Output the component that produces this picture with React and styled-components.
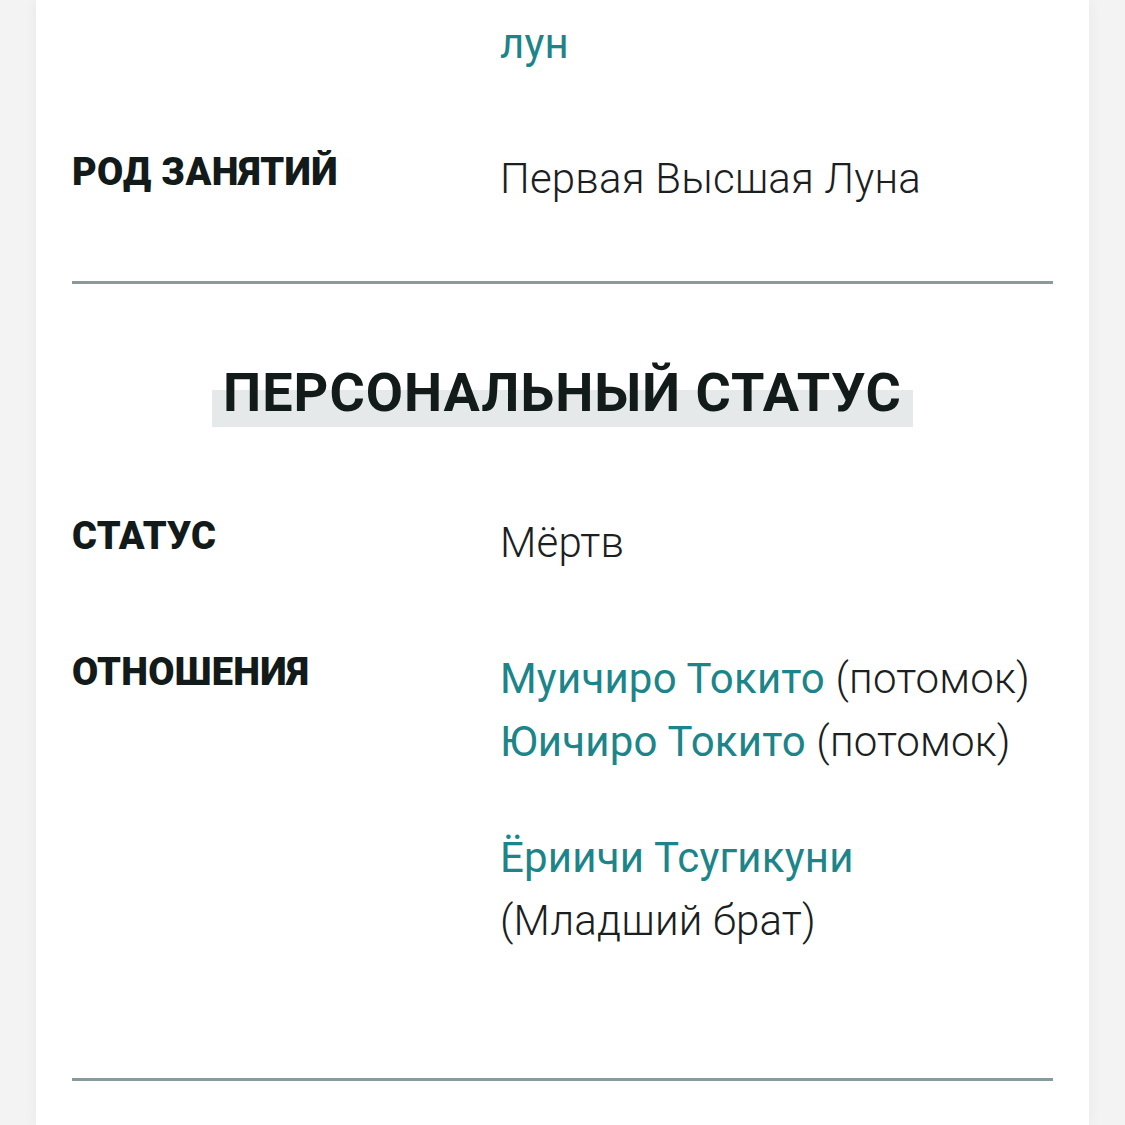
import React from "react";
import styled, { createGlobalStyle } from "styled-components";

const GlobalStyle = createGlobalStyle`
	html, body {
		margin: 0;
		padding: 0;
		background: #f3f3f3;
	}
	body {
		font-family: "Roboto", "Liberation Sans", sans-serif;
	}
`;

const Page = styled.div`
	min-height: 1125px;
	padding: 0 36px;
	overflow: hidden;
`;

const Card = styled.div`
	background: #ffffff;
	min-height: 1125px;
	padding: 12px 36px 0;
	box-sizing: border-box;
	box-shadow: 0 0 14px rgba(0, 0, 0, 0.05);
`;

const InfoRow = styled.div`
	display: grid;
	grid-template-columns: 428px 1fr;
	margin-top: ${(props) => props.$gap || 0}px;
`;

const Label = styled.div`
	font-family: "Roboto", sans-serif;
	font-weight: 900;
	font-size: 38px;
	line-height: 50px;
	letter-spacing: 0.3px;
	text-transform: uppercase;
	color: #121a1a;
`;

const Value = styled.div`
	font-family: "Roboto", sans-serif;
	font-weight: 300;
	font-size: 42px;
	line-height: 63px;
	letter-spacing: 0.2px;
	color: #1c1f1f;
`;

const Para = styled.p`
	margin: ${(props) => props.$top || 0}px 0 0;
`;

const CharLink = styled.a`
	color: #1b8589;
	font-weight: 400;
	text-decoration: none;
`;

const Divider = styled.hr`
	border: none;
	height: 3px;
	background: #8a9a9b;
	margin: ${(props) => props.$top}px 0 0;
`;

const SectionTitle = styled.h2`
	margin: 82px 0 0;
	text-align: center;
	font-family: "Roboto", sans-serif;
	font-weight: 700;
	font-size: 54px;
	line-height: 54px;
	letter-spacing: 1px;
	color: #121a1a;
	text-transform: uppercase;
`;

const Highlight = styled.span`
	display: inline-block;
	padding: 0 11px 7px;
	background: linear-gradient(to bottom, transparent 24px, #e6e9e9 24px);
`;

const App = () => {
	return (
		<>
			<GlobalStyle />
			<Page>
				<Card>
					<InfoRow>
						<div />
						<Value>
							<CharLink href="#">лун</CharLink>
						</Value>
					</InfoRow>

					<InfoRow $gap={72}>
						<Label>Род занятий</Label>
						<Value>Первая Высшая Луна</Value>
					</InfoRow>

					<Divider $top={71} />

					<SectionTitle>
						<Highlight>Персональный статус</Highlight>
					</SectionTitle>

					<InfoRow $gap={84}>
						<Label>Статус</Label>
						<Value>Мёртв</Value>
					</InfoRow>

					<InfoRow $gap={73}>
						<Label>Отношения</Label>
						<Value>
							<Para>
								<CharLink href="#">Муичиро Токито</CharLink> (потомок)
								<br />
								<CharLink href="#">Юичиро Токито</CharLink> (потомок)
							</Para>
							<Para $top={53}>
								<CharLink href="#">Ёриичи Тсугикуни</CharLink>
								<br />
								(Младший брат)
							</Para>
						</Value>
					</InfoRow>

					<Divider $top={126} />
				</Card>
			</Page>
		</>
	);
};

export default App;
